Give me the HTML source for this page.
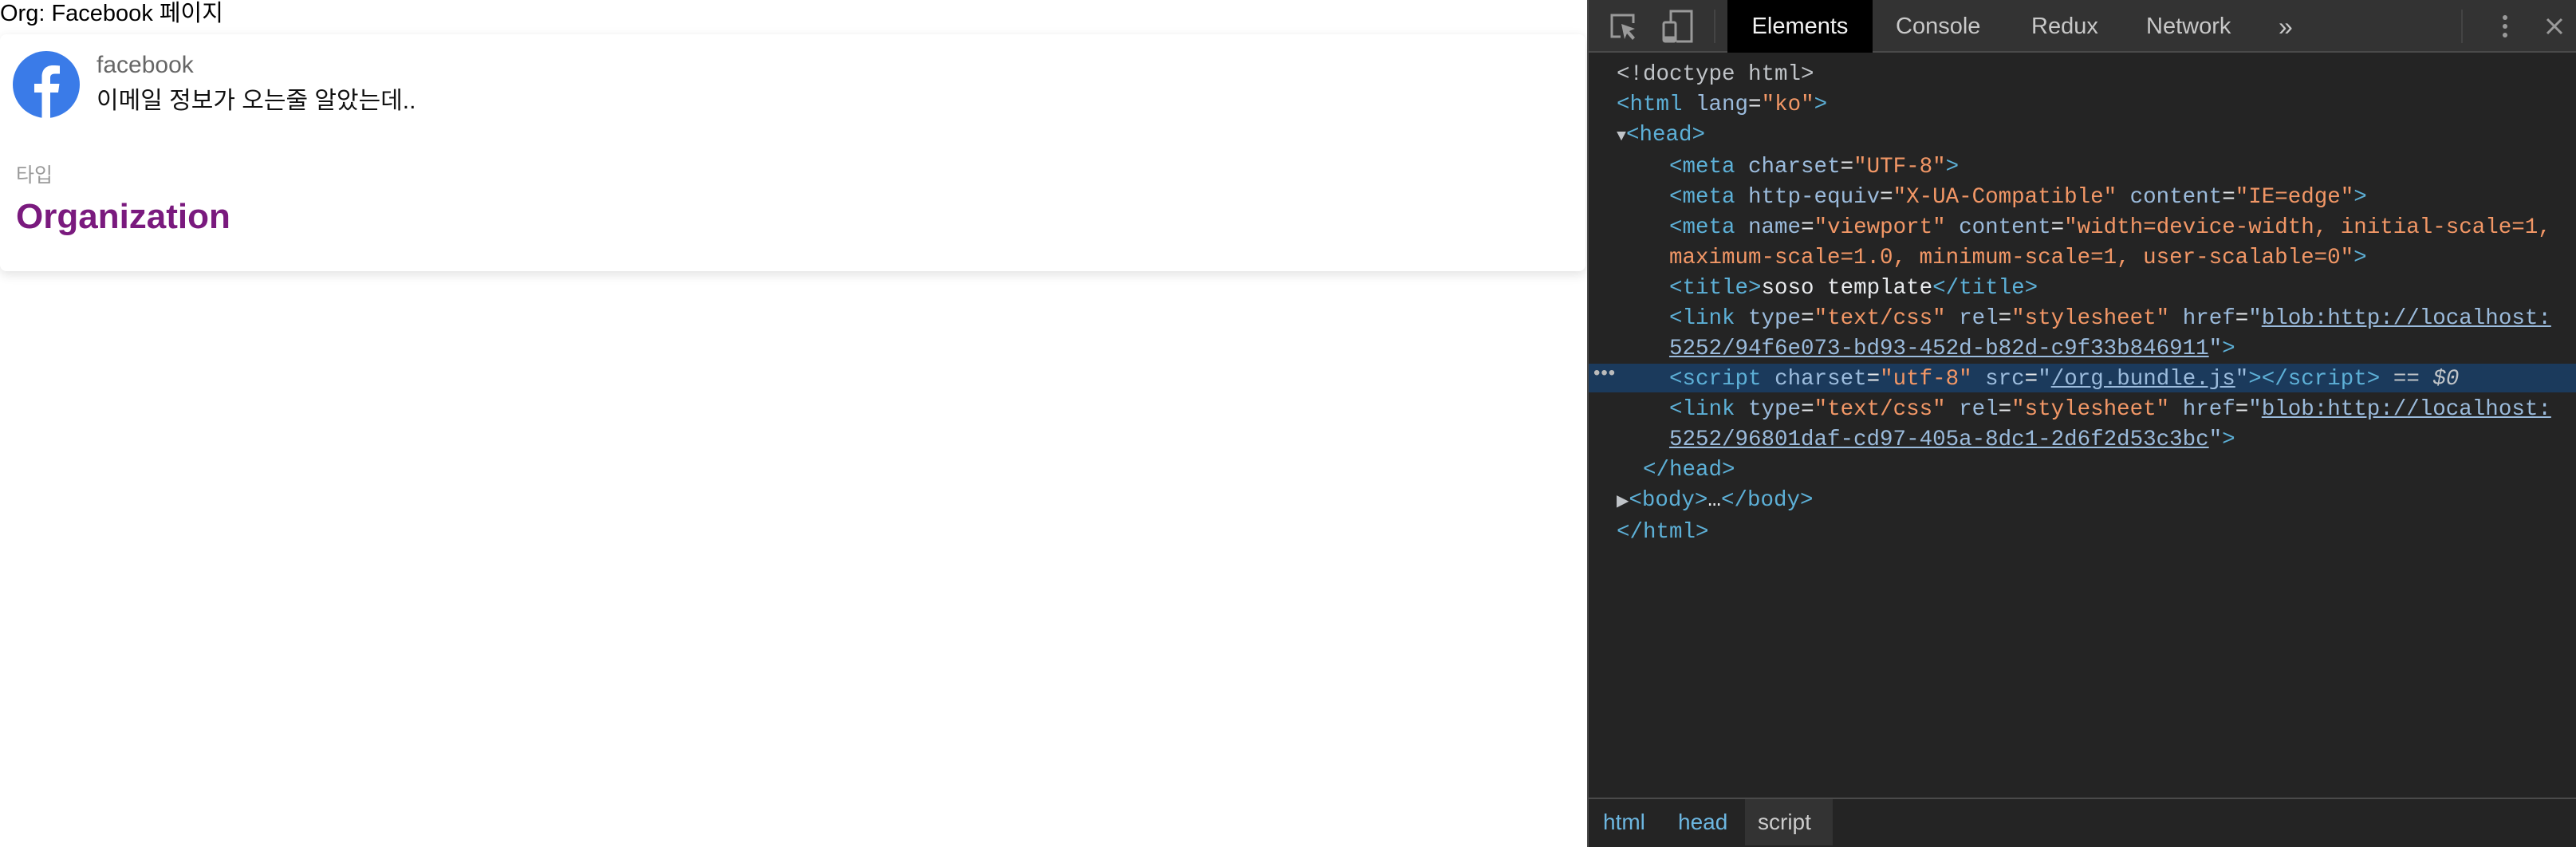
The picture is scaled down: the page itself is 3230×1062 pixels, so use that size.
<!DOCTYPE html>
<html><head><meta charset="utf-8"><style>
*{margin:0;padding:0;box-sizing:border-box}
body{width:3230px;height:1062px;overflow:hidden;background:#fff;position:relative;font-family:"Liberation Sans","Noto Sans CJK KR",sans-serif}
.a{position:absolute;white-space:nowrap}
#dt{position:absolute;left:1990px;top:0;width:1240px;height:1062px;background:#242424;border-left:2px solid #4a4a4a}
#tb{position:absolute;left:0;top:0;width:1240px;height:66px;background:#333;border-bottom:2px solid #4a4a4a}
.tab{position:absolute;top:0;height:66px;line-height:66px;font-size:29px;color:#c8c8c8}
.code{position:absolute;font-family:"Liberation Mono",monospace;font-size:27.5px;line-height:38px;white-space:pre;color:#e8eaed}
.t{color:#5db0d7}.n{color:#9bbbdc}.v{color:#f29766}.g{color:#c0c4c8}.u{text-decoration:underline}
</style></head><body>
<div class="a" style="left:0;top:0;font-size:29px;line-height:34px;color:#000">Org: Facebook 페이지</div>
<div class="a" style="left:0;top:43px;width:1988px;height:297px;background:#fff;border-radius:8px;box-shadow:0 4px 14px rgba(0,0,0,0.12)"></div>
<svg class="a" style="left:16px;top:64px" width="84" height="84" viewBox="0 0 84 84"><circle cx="42" cy="42" r="42" fill="#3a7be8"/><path d="M47 84V52h10l1.5-11H47v-7c0-3.5 1.2-5.5 6-5.5h6V18.5c-1.2-.2-4.8-.5-8.5-.5-8.5 0-14 5-14 14.2V41H27v11h9.5v32z" fill="#fff"/></svg>
<div class="a" style="left:121px;top:64px;font-size:30px;line-height:36px;color:#666">facebook</div>
<div class="a" style="left:121px;top:108px;font-size:30px;line-height:38px;color:#111">이메일 정보가 오는줄 알았는데..</div>
<div class="a" style="left:20px;top:204px;font-size:25px;line-height:32px;color:#999">타입</div>
<div class="a" style="left:20px;top:245px;font-size:44px;line-height:54px;color:#7a1a7e;font-weight:bold">Organization</div>

<div id="dt">
<div id="tb">
<svg class="a" style="left:26px;top:16px" width="36" height="36" viewBox="0 0 36 36" fill="none" stroke="#9a9a9a" stroke-width="3"><path d="M14 30H3V3h27v10"/><path d="M15 14l17 6-7 3 7 8-3 3-7-8-3 7z" fill="#9a9a9a" stroke="none"/></svg>
<svg class="a" style="left:92px;top:12px" width="40" height="42" viewBox="0 0 40 42" fill="none" stroke="#9a9a9a" stroke-width="3"><path d="M11 15V2h26v38H18"/><rect x="2" y="16" width="15" height="24" rx="2"/><path d="M2 36h15" stroke-width="5"/></svg>
<div class="a" style="left:157px;top:12px;width:2px;height:42px;background:#444"></div>
<div class="tab" style="left:174px;width:182px;background:#000;color:#f2f2f2;text-align:center">Elements</div>
<div class="tab" style="left:385px">Console</div>
<div class="tab" style="left:555px">Redux</div>
<div class="tab" style="left:699px">Network</div>
<div class="tab" style="left:865px;font-size:32px">»</div>
<div class="a" style="left:1094px;top:12px;width:2px;height:42px;background:#444"></div>
<div class="a" style="left:1146px;top:19px;width:6px;height:6px;border-radius:3px;background:#9a9a9a;box-shadow:0 11px 0 #9a9a9a,0 22px 0 #9a9a9a"></div>
<svg class="a" style="left:1200px;top:22px" width="22" height="22" viewBox="0 0 22 22" stroke="#9a9a9a" stroke-width="3"><path d="M2 2l18 18M20 2L2 20"/></svg>
</div>
<div class="a" style="left:0;top:456px;width:1238px;height:36px;background:#1b3a5c"></div>
<div class="a" style="left:6px;top:454px;font-size:24px;color:#bbb;letter-spacing:1px">•••</div>
<div class="code" style="left:35px;top:75px"><span class="g">&lt;!doctype html&gt;</span>
<span class="t">&lt;html</span> <span class="n">lang</span>=<span class="v">"ko"</span><span class="t">&gt;</span>
<span class="g" style="font-size:20px">▼</span><span class="t">&lt;head&gt;</span>
    <span class="t">&lt;meta</span> <span class="n">charset</span>=<span class="v">"UTF-8"</span><span class="t">&gt;</span>
    <span class="t">&lt;meta</span> <span class="n">http-equiv</span>=<span class="v">"X-UA-Compatible"</span> <span class="n">content</span>=<span class="v">"IE=edge"</span><span class="t">&gt;</span>
    <span class="t">&lt;meta</span> <span class="n">name</span>=<span class="v">"viewport"</span> <span class="n">content</span>=<span class="v">"width=device-width, initial-scale=1,</span>
<span class="v">    maximum-scale=1.0, minimum-scale=1, user-scalable=0"</span><span class="t">&gt;</span>
    <span class="t">&lt;title&gt;</span>soso template<span class="t">&lt;/title&gt;</span>
    <span class="t">&lt;link</span> <span class="n">type</span>=<span class="v">"text/css"</span> <span class="n">rel</span>=<span class="v">"stylesheet"</span> <span class="n">href</span>=<span class="n">"</span><span class="n u">blob:http://localhost:</span>
    <span class="n u">5252/94f6e073-bd93-452d-b82d-c9f33b846911</span><span class="n">"</span><span class="t">&gt;</span>
    <span class="t">&lt;script</span> <span class="n">charset</span>=<span class="v">"utf-8"</span> <span class="n">src</span>=<span class="n">"</span><span class="n u">/org.bundle.js</span><span class="n">"</span><span class="t">&gt;&lt;/script&gt;</span> <span class="g">== <i>$0</i></span>
    <span class="t">&lt;link</span> <span class="n">type</span>=<span class="v">"text/css"</span> <span class="n">rel</span>=<span class="v">"stylesheet"</span> <span class="n">href</span>=<span class="n">"</span><span class="n u">blob:http://localhost:</span>
    <span class="n u">5252/96801daf-cd97-405a-8dc1-2d6f2d53c3bc</span><span class="n">"</span><span class="t">&gt;</span>
  <span class="t">&lt;/head&gt;</span>
<span class="g" style="font-size:20px">▶</span><span class="t">&lt;body&gt;</span>…<span class="t">&lt;/body&gt;</span>
<span class="t">&lt;/html&gt;</span></div>
<div class="a" style="left:0;top:1000px;width:1238px;height:2px;background:#4a4a4a"></div>
<div class="a" style="left:196px;top:1002px;width:110px;height:58px;background:#333"></div>
<div class="a" style="left:18px;top:1002px;line-height:58px;font-size:28px;color:#6cb6e0">html</div>
<div class="a" style="left:112px;top:1002px;line-height:58px;font-size:28px;color:#6cb6e0">head</div>
<div class="a" style="left:212px;top:1002px;line-height:58px;font-size:28px;color:#ccc">script</div>
</div>
</body></html>
